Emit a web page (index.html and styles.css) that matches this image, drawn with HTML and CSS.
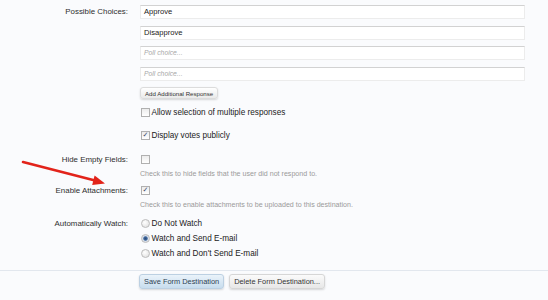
FILE: index.html
```html
<!DOCTYPE html>
<html lang="en">
<head>
  <meta charset="UTF-8">
  <title>Form Destination</title>
  <link rel="stylesheet" href="styles.css">
</head>
<body>

  <div class="form-page">

    <!-- Poll choices -->
    <div class="ctrl-unit">
      <div class="ctrl-label">Possible Choices:</div>
      <div class="ctrl-body">
        <div class="text-box">Approve</div>
        <div class="text-box">Disapprove</div>
        <div class="text-box placeholder">Poll choice...</div>
        <div class="text-box placeholder">Poll choice...</div>
        <div class="small-button">Add Additional Response</div>

        <div class="check-line first-check">
          <span class="checkbox"></span>
          <span>Allow selection of multiple responses</span>
        </div>
        <div class="check-line votes-check">
          <span class="checkbox checked"><span class="tick">&#10003;</span></span>
          <span>Display votes publicly</span>
        </div>
      </div>
    </div>

    <!-- Hide empty fields -->
    <div class="ctrl-unit hide-unit">
      <div class="ctrl-label">Hide Empty Fields:</div>
      <div class="ctrl-body">
        <div class="check-line">
          <span class="checkbox"></span>
        </div>
        <p class="hint">Check this to hide fields that the user did not respond to.</p>
      </div>
    </div>

    <!-- Attachments -->
    <div class="ctrl-unit attach-unit">
      <div class="ctrl-label">Enable Attachments:</div>
      <div class="ctrl-body">
        <div class="check-line">
          <span class="checkbox checked"><span class="tick">&#10003;</span></span>
        </div>
        <p class="hint">Check this to enable attachments to be uploaded to this destination.</p>
      </div>
    </div>

    <!-- Watch -->
    <div class="ctrl-unit watch-unit">
      <div class="ctrl-label">Automatically Watch:</div>
      <div class="ctrl-body radio-list">
        <div class="check-line"><span class="radio"></span><span>Do Not Watch</span></div>
        <div class="check-line"><span class="radio selected"></span><span>Watch and Send E-mail</span></div>
        <div class="check-line"><span class="radio"></span><span>Watch and Don't Send E-mail</span></div>
      </div>
    </div>

    <div class="submit-unit">
      <span class="button primary">Save Form Destination</span>
      <span class="button">Delete Form Destination...</span>
    </div>

    <svg class="pointer-arrow" width="120" height="40" viewBox="0 0 120 40">
      <line x1="3" y1="3" x2="75" y2="21.5" stroke="#e2231a" stroke-width="2.6" stroke-linecap="round"/>
      <polygon points="85,24.5 74.6,16.6 72.2,26" fill="#e2231a"/>
    </svg>
  </div>

</body>
</html>
```

FILE: styles.css
```css
html, body {
  margin: 0;
  padding: 0;
  background-color: #fafbfd;
  font-family: 'Liberation Sans', Arial, sans-serif;
  color: #222;
}

.form-page {
  position: relative;
  width: 548px;
  height: 300px;
  padding-top: 5px;
  box-sizing: border-box;
}

.ctrl-unit {
  display: flex;
  flex-direction: row;
  gap: 12px;
}

.ctrl-label {
  width: 128px;
  flex-shrink: 0;
  text-align: right;
  font-size: 7.9px;
  color: #2e2e2e;
  line-height: 14px;
}

.ctrl-body {
  width: 385px;
  display: flex;
  flex-direction: column;
}

.text-box {
  height: 14px;
  box-sizing: border-box;
  background: #fff;
  border: 1px solid #ececec;
  border-top-color: #d2d2d2;
  margin-bottom: 6.5px;
  padding: 0 3px;
  font-size: 7.6px;
  line-height: 12px;
  color: #222;
}

.text-box.placeholder {
  color: #a8a8a8;
  font-style: italic;
  font-size: 6.8px;
}

.small-button {
  align-self: flex-start;
  height: 12px;
  margin-top: -0.5px;
  padding: 0 4px;
  font-size: 6.1px;
  line-height: 12px;
  color: #333;
  border: 1px solid #dcdcdc;
  border-radius: 3px;
  background: linear-gradient(#ffffff, #eaeaea);
  box-shadow: 0 1px 2px rgba(0, 0, 0, 0.15);
  box-sizing: border-box;
}

.check-line {
  display: flex;
  align-items: center;
  gap: 1.5px;
  height: 10px;
  font-size: 8.2px;
  color: #222;
}

.first-check {
  margin-top: 9px;
}

.votes-check {
  margin-top: 13px;
}

.checkbox {
  width: 9px;
  height: 9px;
  box-sizing: border-box;
  border: 1px solid #b0b0b0;
  background: linear-gradient(#ececec, #ffffff);
  margin-left: 1px;
  display: inline-flex;
  align-items: center;
  justify-content: center;
}

.tick {
  font-family: 'DejaVu Sans', sans-serif;
  font-size: 7px;
  line-height: 7px;
  color: #3a4a6a;
}

.radio {
  width: 9px;
  height: 9px;
  box-sizing: border-box;
  border-radius: 50%;
  border: 1px solid #bcbcbc;
  background: radial-gradient(circle at 40% 35%, #ffffff, #dcdcdc);
  margin-left: 1px;
}

.radio.selected {
  background: radial-gradient(circle, #2c4a78 0, #3f6aa0 1.8px, #d6dde8 2.6px, #ececec 100%);
}

.hide-unit {
  margin-top: 14px;
}

.hide-unit .ctrl-label,
.attach-unit .ctrl-label,
.watch-unit .ctrl-label {
  line-height: 10px;
}

.hint {
  margin: 4px 0 0;
  font-size: 7.1px;
  color: #9a9a9a;
  line-height: 10px;
}

.attach-unit {
  margin-top: 7px;
}

.watch-unit {
  margin-top: 9px;
}

.radio-list {
  gap: 5px;
}

.submit-unit {
  margin-top: 11px;
  border-top: 1px solid #e2e7ee;
  padding: 3px 0 0 139px;
  display: flex;
  gap: 5px;
}

.button {
  height: 15px;
  box-sizing: border-box;
  padding: 0 4px;
  font-size: 7.4px;
  line-height: 14px;
  color: #333;
  border: 1px solid #d6d6d6;
  border-radius: 3px;
  background: linear-gradient(#fbfbfb, #e7e7e7);
  box-shadow: 0 1px 2px rgba(0, 0, 0, 0.15);
}

.button.primary {
  border-color: #bcd0e2;
  background: linear-gradient(#eaf3fa, #c8ddee);
  color: #2d3e52;
}

.pointer-arrow {
  position: absolute;
  left: 20px;
  top: 159px;
}
```
